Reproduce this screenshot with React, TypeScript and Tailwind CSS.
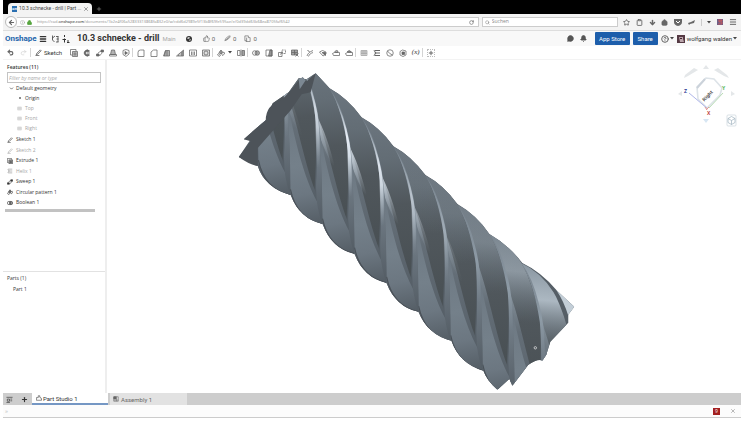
import type { ReactNode } from "react"
import {
    Bell, ChevronDown, CircleHelp, Clipboard, Home, Info, Lock, Menu, MessageCircle,
    Plus, RotateCw, Search, Star, ThumbsUp, Undo2, Redo2, X, ArrowLeft, ArrowDown,
} from "lucide-react"

// 16x16 drawings, stroked and filled with the text colour
const glyphs: Record<string, ReactNode> = {
    sketch: <><path d="M4 10L12 2l2 2-8 8-3 1z" /><path d="M1 15h9" /></>,
    extrude: <><path d="M1 1h11v3M1 1v11h3" /><path d="M5 5h10v10H5z" fill="currentColor" fillOpacity=".35" /><path d="M7 8h6M7 10h6M7 12h6" /></>,
    revolve: <><path d="M13 4A6 6 0 1 0 13 12L10 10A3 3 0 1 1 10 6z" fill="currentColor" /><path d="M7 8h7" /></>,
    sweep: <><path d="M1 10h5v4H1zM10 2h5v4h-5z" fill="currentColor" /><path d="M4 9C5 5 8 7 11 3M6 13c4-1 5-3 6-6" /></>,
    loft: <><path d="M5 2h6l2 9H3z" fill="currentColor" fillOpacity=".5" /><path d="M1 11h14v3H1z" /></>,
    thicken: <><path d="M2 3l6-2 6 2v7l-6 5-6-4z" /><path d="M6 5l5 3-5 3z" fill="currentColor" /></>,
    fillet: <path d="M2 15V7q0-5 5-5h7v13z" />,
    chamfer: <path d="M2 15V6l5-4h7v13z" />,
    draft: <path d="M5 3h8v11H1zM5 3L3 14M8 3v11" fill="currentColor" fillOpacity=".5" />,
    rib: <><path d="M1 14h14V2z" /><path d="M5 11v3M8 8v6M11 6v8M13 4v10" /></>,
    shell: <><path d="M1 2h14v12H1z" /><path d="M5 5v7M8 5v7M11 5v7" /></>,
    hole: <><path d="M1 2h14v12H1z" fill="currentColor" fillOpacity=".2" /><circle cx="8" cy="8" r="4" /></>,
    pattern: <><path d="M4 7l4-5 3 4-3 4z" fill="currentColor" fillOpacity=".7" /><path d="M9 9l5-3 1 4-4 3zM3 9l4 3-2 3-4-3z" /></>,
    mirror: <><path d="M1 3h5v10H1z" /><path d="M10 3h5v10h-5z" fill="currentColor" fillOpacity=".6" /><path d="M8 1v14" /></>,
    boolean: <><circle cx="5.500" cy="8" r="4.500" /><circle cx="10.500" cy="8" r="4.500" fill="currentColor" fillOpacity=".5" /></>,
    split: <><path d="M2 2h12v12H2z" /><path d="M10 2h4v12H7z" fill="currentColor" fillOpacity=".7" /></>,
    transform: <><path d="M1 7h7v8H1z" /><path d="M8 2h7v7H8z" strokeDasharray="2 1" /><path d="M4 11l6-5" /></>,
    deletePart: <><path d="M1 2h12v10H1z" fill="currentColor" fillOpacity=".6" /><path d="M1 7h12M7 2v10" /><path d="M9 9l6 6M15 9l-6 6" /></>,
    modify: <><path d="M2 14c2-6 5-8 12-11M5 15c2-5 4-6 9-8" /><path d="M3 2l4 4" strokeWidth="2" /></>,
    deleteFace: <><path d="M1 6l6-3 7 3v4l-6 4z" /><path d="M6 7h7v6z" fill="currentColor" /></>,
    moveFace: <><path d="M1 9l4-2h10v6H3z" /><path d="M5 6q3-5 7-2l-1 3z" fill="currentColor" fillOpacity=".4" /></>,
    replaceFace: <><path d="M1 9l4-2h10v6H3z" /><path d="M4 6q4-6 9 0z" fill="currentColor" fillOpacity=".7" /></>,
    plane: <path d="M2 3h12v10H2zM2 6h12M2 9h12M6 3v10M10 3v10" fill="currentColor" fillOpacity=".3" opacity=".6" />,
    helix: <path d="M3 3h11M3 8h11M3 13h11M2 3l4 5-4 5" strokeWidth="2" />,
    curve: <><circle cx="8" cy="8" r="6.500" /><path d="M3 4q4 6 10 8" /></>,
    derived: <><path d="M2 5l5-3 7 2v8l-6 3-6-3z" /><path d="M6 6h5v5H6z" fill="currentColor" /></>,
    versions: <path d="M3 1v9l4 4M3 6l5-4M10 3h5M11 8h4M10 14h5M14 3v11" />,
    insert: <path d="M5 0v4M5 7v8M1 9h7M12 10v5M10 15h5" strokeWidth="2" />,
    link: <path d="M2 13l2-5 6-5 4-1-1 4-6 5zM5 11l6-6" />,
    doc: <><path d="M2 2h8v4h4v9H5V13H2z" /><path d="M6 6v9" /></>,
    studio: <path d="M1 14V7h5V2h4v4q5 0 5 8z" />,
    assembly: <><path d="M2 2h12v12H2z" /><path d="M2 2h7v6H2z" fill="currentColor" /><path d="M2 11h12M9 8v6" /></>,
    tabs: <path d="M1 3h14M3 7h5v5H3zM10 7h4M10 11h4M1 15h8" />,
}

function Glyph({ name, size = 9 }: { name: string; size?: number }) {
    return (
        <svg width={size} height={size} viewBox="0 0 16 16" fill="none" stroke="currentColor" strokeWidth="1.5" className="shrink-0">
            {glyphs[name]}
        </svg>
    )
}

const groups = [
    ["extrude", "revolve", "sweep", "loft", "thicken"],
    ["fillet", "chamfer", "draft", "rib", "shell", "hole"],
]

const bodyGroups = [
    ["boolean", "split", "transform", "deletePart"],
    ["modify", "deleteFace", "moveFace", "replaceFace"],
]

const features: { name: string; icon: string; muted?: boolean }[] = [
    { name: "Sketch 1", icon: "sketch" },
    { name: "Sketch 2", icon: "sketch", muted: true },
    { name: "Extrude 1", icon: "extrude" },
    { name: "Helix 1", icon: "helix", muted: true },
    { name: "Sweep 1", icon: "sweep" },
    { name: "Circular pattern 1", icon: "pattern" },
    { name: "Boolean 1", icon: "boolean" },
]

// one entry per flute, offset along the axis and how strongly the edge catches the light
const flutes = [
    { n: -4, glow: 0, light: 0 },
    { n: -3, glow: 0.2, light: 0 },
    { n: -2, glow: 0.75, light: 0 },
    { n: -1, glow: 1, light: 0 },
    { n: 0, glow: 0.9, light: 0 },
    { n: 1, glow: 0.5, light: 0.05 },
    { n: 2, glow: 0.2, light: 0.1 },
    { n: 3, glow: 0, light: 0.25 },
    { n: 4, glow: 0, light: 0.5 },
    { n: 5, glow: 0, light: 0.9 },
]

function Tool({ name, children }: { name: string; children: ReactNode }) {
    return (
        <button type="button" aria-label={name} className="flex h-[13px] w-[13px] shrink-0 items-center justify-center">
            {children}
        </button>
    )
}

function Divider() {
    return <span className="mr-px h-[9px] w-px shrink-0 bg-[#d4d4d4]" />
}

function Caret() {
    return (
        <svg width="4" height="3" viewBox="0 0 4 3" className="shrink-0">
            <path d="M0 0h4L2 2.5z" fill="#444" />
        </svg>
    )
}

function Flute({ n, glow, light }: { n: number; glow: number; light: number }) {
    return (
        <g transform={`translate(${n * 32.1} ${n * 29.25})`}>
            <path d="M360.6 117Q380 126 392.7 146C399 156 412 190 412 218Q412 250 410 280C398 250 391 205 381 178C378 160 372 136 360.6 117Z" fill="url(#land)" />
            <path d="M360.6 117Q380 126 392.7 146C399 156 412 190 412 218L411 240C398 225 391 205 381 178C378 160 372 136 360.6 117Z" fill="url(#lit)" opacity={light} />
            <path d="M380 174C390 196 399 248 411 279L418 313L386 292Z" fill="url(#groove)" />
            <path d="M380 174C387 186 394 206 399 228C391 216 386 202 382 192Z" fill="url(#shine)" opacity={glow * 0.8} />
            <path d="M383 190C390 226 399 264 413 290L418 312Q395 307 386 280Q386 240 383 190Z" fill="url(#blade)" />
            <path d="M386 277Q392 306 418 312" fill="none" stroke="#4a5158" strokeWidth="1.200" />
            <path d="M360.6 117C370 132 376 155 379 176Q381 200 380 235Q378 262 386 283Q385 235 384 205Q384 178 378 157Q372 132 360.6 117Z" fill="url(#edge)" />
            <path d="M364 123C373 142 378 160 379 180L380 226L383 226Q384 190 381 172Q376 144 364 123Z" fill="url(#shine)" opacity={glow} />
        </g>
    )
}

function Drill() {
    return (
        <svg viewBox="106 61 635 331" className="absolute inset-0 h-full w-full" role="img" aria-label="Part 1">
            <defs>
                <linearGradient id="land" gradientUnits="userSpaceOnUse" x1="382" y1="120" x2="398" y2="275">
                    <stop offset="0" stopColor="#6b757e" />
                    <stop offset=".25" stopColor="#636d75" />
                    <stop offset=".55" stopColor="#50575c" />
                    <stop offset="1" stopColor="#495054" />
                </linearGradient>
                <linearGradient id="lit" gradientUnits="userSpaceOnUse" x1="386" y1="120" x2="378" y2="205">
                    <stop offset="0" stopColor="#8d9aa5" />
                    <stop offset=".4" stopColor="#b4c0ca" />
                    <stop offset="1" stopColor="#66717a" stopOpacity="0" />
                </linearGradient>
                <linearGradient id="groove" gradientUnits="userSpaceOnUse" x1="384" y1="178" x2="412" y2="300">
                    <stop offset="0" stopColor="#828e98" />
                    <stop offset=".3" stopColor="#646e77" />
                    <stop offset="1" stopColor="#545d65" />
                </linearGradient>
                <linearGradient id="blade" gradientUnits="userSpaceOnUse" x1="384" y1="195" x2="406" y2="311">
                    <stop offset="0" stopColor="#6d7882" />
                    <stop offset=".5" stopColor="#74808a" />
                    <stop offset=".75" stopColor="#6c7781" />
                    <stop offset="1" stopColor="#565f67" />
                </linearGradient>
                <linearGradient id="edge" gradientUnits="userSpaceOnUse" x1="370" y1="117" x2="382" y2="280">
                    <stop offset="0" stopColor="#77828c" />
                    <stop offset=".35" stopColor="#8e9ba6" />
                    <stop offset=".6" stopColor="#6f7a84" />
                    <stop offset="1" stopColor="#545d65" />
                </linearGradient>
                <linearGradient id="shine" gradientUnits="userSpaceOnUse" x1="372" y1="125" x2="382" y2="226">
                    <stop offset="0" stopColor="#dfe7f0" stopOpacity="0" />
                    <stop offset=".4" stopColor="#e8eef6" />
                    <stop offset=".6" stopColor="#d5dee7" />
                    <stop offset="1" stopColor="#a4b0bb" stopOpacity="0" />
                </linearGradient>
                <clipPath id="outline">
                    <path d="M315 73L329 88Q347 98 361 117Q379 127 393 146Q411 156 425 175Q443 185 457 204Q476 215 489 234Q508 245 522 263Q541 272 557 291L574 307L568 315L568 323L550 342L546 355L542 361Q538 358 528 365L512 386L509 379L497 390Q486 380 483 371Q459 364 451 341Q427 335 418 312Q395 307 386 283Q363 278 354 254Q331 249 322 224Q299 219 290 195Q264 188 257 166L238 157L250 139L243 139L265 120L272 103L288 92L298 78L306 79Z" />
                </clipPath>
            </defs>
            <g clipPath="url(#outline)">
                <rect x="230" y="66" width="350" height="330" fill="#555e66" />
                {flutes.map((f) => (
                    <Flute key={f.n} n={f.n} glow={f.glow} light={f.light} />
                ))}
                <path d="M556 290L575 306L568 316Q564 302 556 290Z" fill="#c3ced7" />
            </g>
            <path d="M315 73L310 92L301 94L290 110L270 133L257 148L257 166Q249 165 238 157L250 141L243 139L265 120Q265 105 280 100Q288 94 298 80L302 77L306 81Z" fill="#4d5359" />
            <path d="M298 79L302 77L305 80L299 89Z" fill="#7c8893" />
            <circle cx="535" cy="348" r="1.200" fill="#4b5257" stroke="#eee" strokeWidth=".7" />
        </svg>
    )
}

function ViewCube() {
    return (
        <svg width="72" height="70" viewBox="0 0 72 70" className="absolute right-0 top-0" role="img" aria-label="View cube">
            <g fill="#e4e7e9">
                <path d="M37 5l3 4h-6zM16 15l9-7 4 2-10 6-4 2zM58 15l-9-7-4 2 10 6 5 2zM9 34l4-3v5zM66 34l-4-3v5z" />
                <path d="M37 63l3-4h-6z" fill="#d7e6f3" />
            </g>
            <path d="M28 27l9-9 8 1 8 9-2 7-13 13-9-9z" fill="#fff" stroke="#dde3e8" strokeWidth="1.600" />
            <path d="M28 28l8-9" stroke="#cbd2da" strokeWidth="2" />
            <path d="M20 33l19 16" stroke="#afb6ea" />
            <path d="M40 48l14-15" stroke="#b9ddb5" />
            <path d="M37 50l3-3M36 47l2 3" stroke="#e59a93" />
            <g fontFamily="Liberation Sans, sans-serif" fontWeight="700" fontSize="5">
                <text x="15" y="33" fill="#283791">Z</text>
                <text x="53" y="30" fill="#3daf43">Y</text>
                <text x="38" y="55" fill="#bd3830">X</text>
                <text x="-6" y="2" fill="#444" transform="translate(38 36) rotate(-45)">Right</text>
            </g>
            <g fill="none" stroke="#9fb1bf" strokeWidth=".7">
                <rect x="58" y="55" width="9" height="11" rx="1" stroke="#cbd5dc" />
                <path d="M62.500 56.500l3.500 2v4l-3.500 2-3.500-2v-4zM59 58.500l3.500 2 3.500-2M62.500 60.500v4" />
            </g>
        </svg>
    )
}

function Browser() {
    return (
        <>
            <div className="flex h-[14px] items-end bg-black pl-[5px]">
                <div className="flex h-[11px] w-[84px] items-center gap-[2px] rounded-t bg-[#f3f3f3] px-1 text-[5px] text-[#444]">
                    <span className="flex h-[6px] w-[6px] items-center justify-center bg-[#2a6fb0] text-[4px] font-bold leading-none text-white">on</span>
                    <span className="flex-1 whitespace-nowrap font-['Roboto',sans-serif]">10.3 schnecke - drill | Part ...</span>
                    <button type="button" aria-label="Close tab"><X size={6} /></button>
                </div>
                <button type="button" aria-label="New tab" className="ml-1 mb-[2px] text-[#aaa]"><Plus size={6} /></button>
            </div>
            <div className="flex h-[17px] items-center border-b border-[#ddd] bg-[#f3f3f3] text-[#666]">
                <button type="button" aria-label="Back" className="ml-[2px] flex h-[12px] w-[12px] shrink-0 items-center justify-center rounded-full border border-[#bbb] bg-white">
                    <ArrowLeft size={7} strokeWidth={4} />
                </button>
                <div className="flex h-[10px] flex-1 items-center border border-l-0 border-[#ccc] bg-white pl-[3px]">
                    <Info size={5} className="text-[#999]" />
                    <Lock size={5} strokeWidth={4} fill="#55a33c" className="ml-[2px] text-[#55a33c]" />
                    <p className="ml-[5px] flex-1 whitespace-nowrap font-['Noto_Sans',sans-serif] text-[4px] text-[#999]">
                        https://cad.<span className="text-[#222]">onshape.com</span>/documents/1b2e4f06a52833313868fa832e0/w/cdd6d2989e5f13b8f69fe595ae/e/0d39dd63b68ea8705faf6542
                    </p>
                    <button type="button" aria-label="Reload" className="mr-1"><RotateCw size={5} strokeWidth={3} /></button>
                </div>
                <label className="ml-[3px] flex h-[10px] w-[136px] items-center gap-[2px] border border-[#ccc] bg-white pl-[2px]">
                    <Search size={5} />
                    <input aria-label="Suchen" placeholder="Suchen" className="w-full text-[5px] outline-none placeholder:text-[#888]" />
                </label>
                <div className="ml-[5px] flex w-[118px] items-center justify-between pr-1">
                    <Star size={7} strokeWidth={3} />
                    <Clipboard size={7} strokeWidth={3} />
                    <ArrowDown size={7} strokeWidth={5} />
                    <Home size={7} fill="#666" />
                    <svg width="8" height="7" viewBox="0 0 8 7"><path d="M0 0h8v3q0 3-4 4-4-1-4-4z" fill="#666" /><path d="M2 2l2 2 2-2" fill="none" stroke="#fff" /></svg>
                    <svg width="7" height="7" viewBox="0 0 7 7"><path d="M0 4l3-1 4-2-1 3-4 1-1 1z" fill="#666" /></svg>
                    <span className="h-[7px] w-px bg-[#ccc]" />
                    <Caret />
                    <svg width="6" height="6" viewBox="0 0 6 6"><path d="M0 0h6v6H0z" fill="#6d5f86" /><path d="M1 1h4v1H2v1h3v2H1" fill="none" stroke="#d35555" strokeWidth=".8" /></svg>
                    <Menu size={8} strokeWidth={3} />
                </div>
            </div>
        </>
    )
}

export default function App() {
    return (
        <div className="min-h-screen bg-white pb-[3px] font-['Open_Sans',sans-serif] text-[#333]">
            <div className="mx-[3px] flex min-h-[calc(100vh-3px)] flex-col">
                <Browser />

                <header className="flex h-[15px] items-center bg-[#f8f8f8] pl-[2px] pr-1 font-['Roboto',sans-serif] text-[6px]">
                    <a href="#" className="w-[34px] text-[8px] font-bold text-[#1c65ab]">Onshape</a>
                    <button type="button" aria-label="Menu"><Menu size={8} strokeWidth={4} /></button>
                    <button type="button" aria-label="Versions" className="ml-1"><Glyph name="versions" size={8} /></button>
                    <button type="button" aria-label="Insert" className="ml-[3px]"><Glyph name="insert" size={8} /></button>
                    <h1 className="ml-[7px] whitespace-nowrap text-[9px] font-bold">10.3 schnecke - drill</h1>
                    <span className="ml-[3px] text-[#aaa]">Main</span>
                    <svg width="6" height="6" viewBox="0 0 6 6" className="ml-[10px]"><circle cx="3" cy="3" r="3" fill="#333" /><path d="M1 2l2-1 1 1-2 1zM3 4l2-1-1 2z" fill="#eee" /></svg>
                    <button type="button" className="ml-[11px] flex items-center gap-[2px] text-[#666]"><ThumbsUp size={7} />0</button>
                    <button type="button" className="ml-[9px] flex items-center gap-[2px] text-[#666]"><Glyph name="link" size={7} />0</button>
                    <button type="button" className="ml-[8px] flex items-center gap-[2px] text-[#666]"><Glyph name="doc" size={7} />0</button>
                    <div className="ml-auto flex items-center">
                        <MessageCircle size={7} fill="#555" className="text-[#555]" />
                        <Bell size={7} fill="#555" strokeWidth={3} className="ml-[6px] text-[#555]" />
                        <button type="button" className="ml-[8px] h-[13px] w-[35px] rounded-[1px] bg-[#1d5eab] text-white">App Store</button>
                        <button type="button" className="ml-[3px] h-[13px] w-[25px] rounded-[1px] bg-[#1d5eab] text-white">Share</button>
                        <CircleHelp size={8} strokeWidth={3} className="ml-[3px] mr-px text-[#666]" />
                        <Caret />
                        <svg width="8" height="8" viewBox="0 0 8 8" className="ml-[3px] mr-[2px]"><path d="M0 0h8v8H0z" fill="#543943" /><path d="M2 2h4v2l1 3H3z" fill="#bba6ac" /><path d="M3 3h2v1H3z" fill="#43242e" /></svg>
                        <span className="mr-px whitespace-nowrap">wolfgang walden</span>
                        <Caret />
                    </div>
                </header>

                <nav aria-label="Tools" className="flex h-[14px] items-center border-b border-[#f3f3f3] pl-px text-[#666]">
                    <Tool name="Undo"><Undo2 size={7} strokeWidth={4} /></Tool>
                    <Tool name="Redo"><Redo2 size={7} className="text-[#ccc]" /></Tool>
                    <Divider />
                    <button type="button" className="mr-[5px] flex items-center gap-[2px] pl-[3px] font-['Roboto',sans-serif] text-[6px] text-[#333]"><Glyph name="sketch" size={7} />Sketch</button>
                    {groups.map((group, i) => (
                        <div key={i} className="flex items-center">
                            {group.map((t) => <Tool key={t} name={t}><Glyph name={t} size={8} /></Tool>)}
                            <Divider />
                        </div>
                    ))}
                    <Tool name="Pattern"><Glyph name="pattern" size={8} /></Tool>
                    <span className="pl-px pr-[2px]"><Caret /></span>
                    <Tool name="Mirror"><Glyph name="mirror" size={8} /></Tool>
                    <Divider />
                    {bodyGroups.map((group, i) => (
                        <div key={i} className="flex items-center">
                            {group.map((t) => <Tool key={t} name={t}><Glyph name={t} size={8} /></Tool>)}
                            <Divider />
                        </div>
                    ))}
                    <Tool name="Plane"><Glyph name="plane" size={8} /></Tool>
                    <Tool name="Helix"><Glyph name="helix" size={8} /></Tool>
                    <Tool name="Composite curve"><Glyph name="curve" size={8} /></Tool>
                    <Tool name="Derived"><Glyph name="derived" size={8} /></Tool>
                    <button type="button" className="w-[13px] font-['Liberation_Serif',serif] text-[7px] font-bold italic leading-none">(x)</button>
                    <Divider />
                    <Tool name="Add feature"><Plus size={8} strokeWidth={4} className="border border-dotted border-[#bbb]" /></Tool>
                </nav>

                <main className="flex flex-1">
                    <aside className="flex w-[104px] shrink-0 flex-col border-r-2 border-[#eee] text-[5px]">
                        <div className="flex h-[212px] flex-col border-b border-[#e2e2e2] pl-1">
                            <h2 className="mt-[2px] h-[10px] font-semibold leading-[10px]">Features (11)</h2>
                            <input aria-label="Filter features" placeholder="Filter by name or type" className="mr-1 h-[11px] border border-[#c4c4c4] px-px italic outline-none placeholder:text-[#aaa]" />
                            <ul className="leading-[10px]">
                                <li>
                                    <button type="button" className="flex h-[10px] items-center gap-[2px] pl-[2px]"><ChevronDown size={5} strokeWidth={3} />Default geometry</button>
                                    <ul>
                                        <li className="flex items-center gap-1 pl-[12px]"><span className="h-[2px] w-[2px] rounded-full bg-[#666]" />Origin</li>
                                        {["Top", "Front", "Right"].map((plane) => (
                                            <li key={plane} className="flex items-center gap-[3px] pl-[10px] text-[#a5a5a5]"><Glyph name="plane" size={5} />{plane}</li>
                                        ))}
                                    </ul>
                                </li>
                            </ul>
                            <ul className="mt-[2px] grid h-[73px] auto-rows-fr">
                                {features.map((f) => (
                                    <li key={f.name} className={f.muted ? "flex items-center gap-[3px] text-[#a5a5a5]" : "flex items-center gap-[3px]"}>
                                        <Glyph name={f.icon} size={6} />{f.name}
                                    </li>
                                ))}
                            </ul>
                            <div className="-ml-[2px] mt-px h-[3px] w-[90px] bg-[#c2c2c2]" />
                        </div>
                        <h2 className="pl-1 pt-px leading-[11px]">Parts (1)</h2>
                        <p className="pl-[10px] leading-[11px]">Part 1</p>
                    </aside>
                    <section className="relative flex-1">
                        <Drill />
                        <ViewCube />
                    </section>
                </main>

                <footer>
                    <div className="flex h-[12px] items-center bg-[#cdcdcd] font-['Roboto',sans-serif] text-[6px]">
                        <button type="button" aria-label="Tab manager" className="ml-[3px]"><Glyph name="tabs" size={7} /></button>
                        <button type="button" aria-label="Add tab" className="ml-2"><Plus size={7} strokeWidth={4} /></button>
                        <a href="#" className="ml-[4px] flex h-full w-[76px] items-center gap-px border-b-2 border-[#7597c4] bg-white pl-1"><Glyph name="studio" size={6} />Part Studio 1</a>
                        <a href="#" className="ml-[2px] flex h-full w-[77px] items-center gap-[2px] bg-[#e2e2e2] pl-[3px] text-[#666]"><Glyph name="assembly" size={6} />Assembly 1</a>
                    </div>
                    <div className="flex h-[13px] items-center border-b border-[#ccc] bg-[#fcfcfc] px-[2px] text-[6px] text-[#bbb]">
                        »
                        <span className="ml-auto flex h-[7px] w-[7px] items-center justify-center bg-[#a32020] text-[5px] leading-none text-white">9</span>
                        <button type="button" aria-label="Close" className="ml-[10px] mr-[3px] text-[#777]"><X size={6} /></button>
                    </div>
                </footer>
            </div>
        </div>
    )
}
